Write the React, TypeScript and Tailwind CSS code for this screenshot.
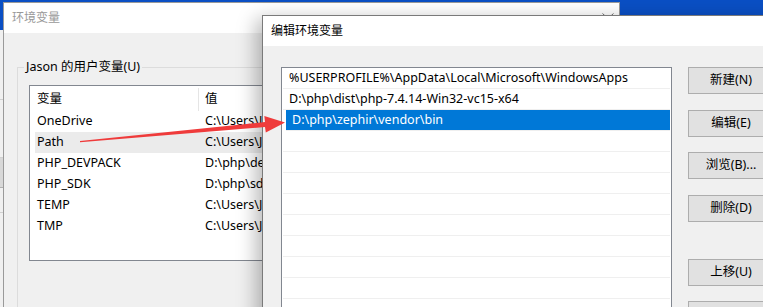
const font = "font-['Noto_Sans','Noto_Sans_CJK_SC',sans-serif]";

const backRows = [
  { name: "OneDrive", value: "C:\\Users\\Jason\\OneDrive" },
  { name: "Path", value: "C:\\Users\\Jason\\AppData", active: true },
  { name: "PHP_DEVPACK", value: "D:\\php\\devpack" },
  { name: "PHP_SDK", value: "D:\\php\\sdk" },
  { name: "TEMP", value: "C:\\Users\\Jason\\AppData" },
  { name: "TMP", value: "C:\\Users\\Jason\\AppData" },
];

const paths = [
  "%USERPROFILE%\\AppData\\Local\\Microsoft\\WindowsApps",
  "D:\\php\\dist\\php-7.4.14-Win32-vc15-x64",
  "D:\\php\\zephir\\vendor\\bin",
  "", "", "", "", "", "", "", "", "", "",
];

const buttons = [
  { label: "新建(N)", top: "mt-0" },
  { label: "编辑(E)", top: "mt-[16px]" },
  { label: "浏览(B)...", top: "mt-[15px]" },
  { label: "删除(D)", top: "mt-[16px]" },
  { label: "上移(U)", top: "mt-[37px]" },
  { label: "", top: "mt-[15px]" },
];

function Button({ label, top }: { label: string; top: string }) {
  return (
    <div className={`${top} h-[27px] w-[86px] shrink-0 border border-[#adadad] bg-[#e1e1e1] flex items-center justify-center text-[12.5px] text-black`}>
      {label}
    </div>
  );
}

export default function App() {
  return (
    <div className={`relative w-[763px] h-[307px] overflow-hidden bg-[#0a4fc4] ${font}`}>
      {/* window far behind, left edge */}
      <div className="absolute left-0 top-[30px] w-[4px] h-[290px] bg-[#f0f0f0] flex flex-col">
        <div className="h-[70px] border-b border-[#d0d0d0]" />
        <div className="h-[58px] border-b border-[#d0d0d0]" />
        <div className="h-[30px] bg-[#d8d8d8] border-b border-[#b0b0b0]" />
        <div className="h-[25px] border-b border-[#d0d0d0]" />
      </div>

      {/* 环境变量 dialog */}
      <div className="absolute left-[3px] top-[2px] w-[617px] h-[320px] border border-[#9a9a9a] bg-[#f0f0f0] flex flex-col">
        <div className="h-[30px] bg-white flex items-center pl-[8px] relative shrink-0">
          <span className="text-[12px] text-[#999999]">环境变量</span>
          <svg className="absolute left-[598px] top-[10px]" width="12" height="6" viewBox="0 0 12 6">
            <path d="M0.5 0.5 L6 5.5 L11.5 0.5" stroke="#6e6e6e" strokeWidth="1" fill="none" />
          </svg>
        </div>
        <div className="relative flex-1 pl-[13px] pt-[34px]">
          <div className="relative border-l border-t border-[#dcdcdc] h-[260px] pl-[11px] pt-[17px]">
            <span className="absolute left-[6px] -top-[10px] bg-[#f0f0f0] px-[2px] text-[12.5px] leading-[18px] text-black">
              Jason 的用户变量(U)
            </span>
            <div className="w-[240px] h-[176px] border border-[#828790] bg-white flex flex-col pt-[2px] pl-[5px] overflow-hidden">
              <div className="h-[23px] flex items-center text-[12.5px] text-black">
                <div className="w-[164px] shrink-0 h-full flex items-center pl-[2px] border-r border-[#e5e5e5]">变量</div>
                <div className="pl-[6px]">值</div>
              </div>
              {backRows.map((r) => (
                <div
                  key={r.name}
                  className={`h-[21px] flex items-center text-[12.5px] text-black whitespace-nowrap ${r.active ? "bg-[#ebebeb]" : ""}`}
                >
                  <div className="w-[170px] shrink-0 pl-[2px]">{r.name}</div>
                  <div className="shrink-0">{r.value}</div>
                </div>
              ))}
            </div>
          </div>
        </div>
      </div>

      {/* 编辑环境变量 dialog */}
      <div className="absolute left-[262px] top-[15px] w-[520px] h-[320px] border border-[#7a7a7a] bg-[#f0f0f0] flex flex-col shadow-[-6px_4px_18px_rgba(0,0,0,0.28)]">
        <div className="h-[30px] bg-white flex items-center pl-[8px] shrink-0">
          <span className="text-[12px] text-black">编辑环境变量</span>
        </div>
        <div className="flex pl-[18px] pt-[21px] gap-[16px]">
          <div className="w-[391px] h-[260px] border border-[#828790] bg-white flex flex-col px-[1px] shrink-0">
            {paths.map((p, i) => (
              <div
                key={i}
                className={`h-[21px] shrink-0 flex items-center pl-[6px] text-[12.5px] whitespace-nowrap border-b border-[#efefef] ${
                  i === 2 ? "bg-[#0078d7] text-white ml-[3px] pl-[3px] border-[#0078d7]" : "text-black"
                }`}
              >
                {p}
              </div>
            ))}
          </div>
          <div className="flex flex-col">
            {buttons.map((b, i) => (
              <Button key={i} label={b.label} top={b.top} />
            ))}
          </div>
        </div>
      </div>

      {/* red arrow annotation */}
      <svg className="absolute left-0 top-0 pointer-events-none" width="763" height="307" viewBox="0 0 763 307">
        <polygon
          points="80,141 265,122 264.3,116 285,122.5 265.8,132.5 265,127 80,142.2"
          fill="#ef3b3b"
        />
      </svg>
    </div>
  );
}
